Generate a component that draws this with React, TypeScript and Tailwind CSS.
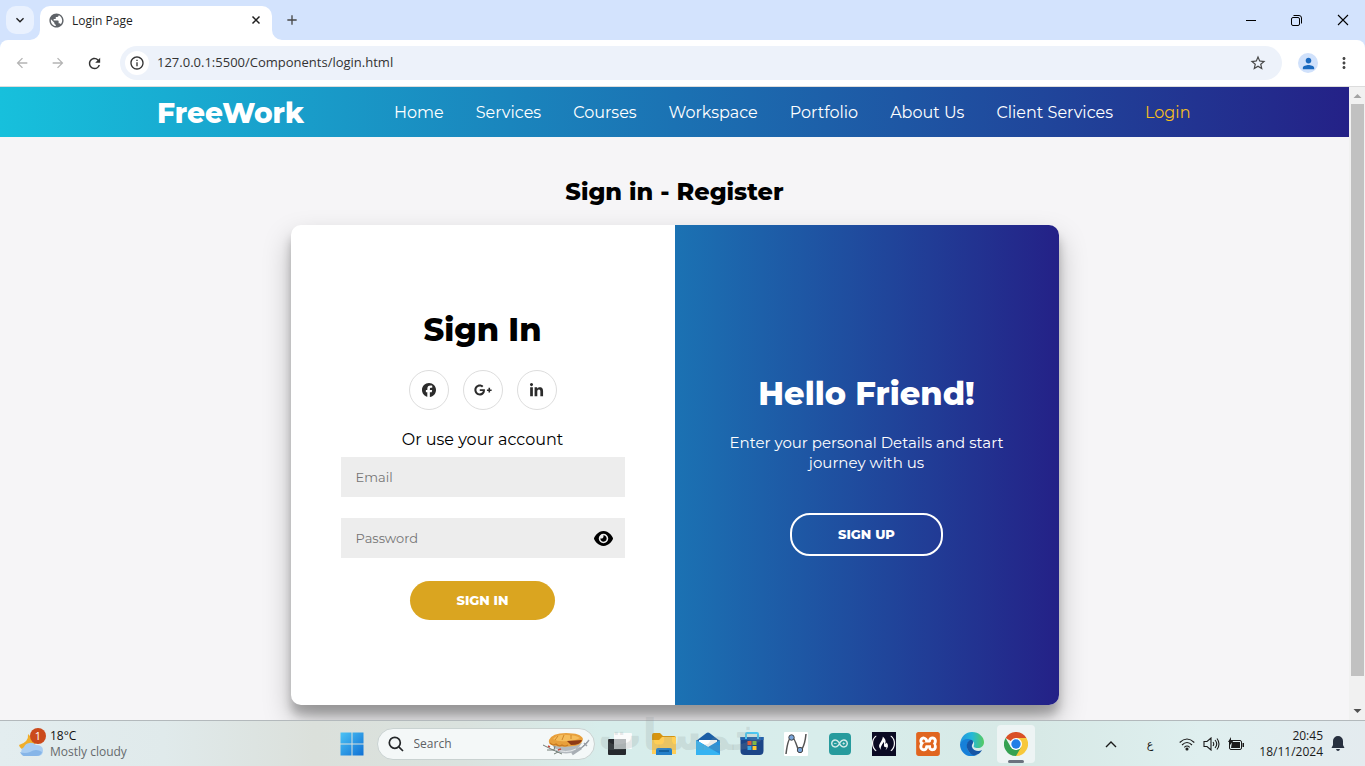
import type { ReactNode } from "react";
import { FaFacebook, FaGooglePlusG, FaLinkedinIn, FaEye } from "react-icons/fa6";
import {
  MdPublic,
  MdArrowBack,
  MdArrowForward,
  MdRefresh,
  MdStarBorder,
  MdMoreVert,
  MdPerson,
  MdInfoOutline,
  MdAdd,
  MdKeyboardArrowDown,
} from "react-icons/md";
import { SiArduino, SiFreecodecamp, SiXampp } from "react-icons/si";

const navLinks = ["Home", "Services", "Courses", "Workspace", "Portfolio", "About Us", "Client Services", "Login"];

function TabStrip() {
  return (
    <div className="flex h-10 items-end bg-[#d3e3fd]">
      <button aria-label="Search tabs" className="mb-1.5 ml-1.5 flex h-7 w-7 items-center justify-center rounded-[10px] bg-[#e9f1fe] text-[#1f1f1f]">
        <MdKeyboardArrowDown size={16} />
      </button>
      <div className="relative ml-1.5 flex h-[34px] w-58 items-center rounded-t-[10px] bg-white px-2">
        <svg className="absolute bottom-0 -left-2.5" width="10" height="10" aria-hidden="true">
          <path d="M10 0v10H0A10 10 0 0 0 10 0z" fill="#fff" />
        </svg>
        <svg className="absolute -right-2.5 bottom-0" width="10" height="10" aria-hidden="true">
          <path d="M0 0v10h10A10 10 0 0 1 0 0z" fill="#fff" />
        </svg>
        <MdPublic size={17} className="mb-1.5 text-[#5f6368]" />
        <span className="mb-1 ml-[7px] flex-1 text-xs text-[#1f1f1f]">Login Page</span>
        <button aria-label="Close tab" className="mb-1.5 flex h-4 w-4 items-center justify-center text-[#1f1f1f]">
          <svg width="10" height="10" viewBox="0 0 10 10" stroke="currentColor" strokeWidth="1.5" aria-hidden="true">
            <path d="M1.5 1.5l7 7M8.500 1.5l-7 7" />
          </svg>
        </button>
      </div>
      <button aria-label="New tab" className="mb-3 ml-3 text-[#474747]">
        <MdAdd size={16} />
      </button>
      <div className="flex h-10 flex-1 items-center justify-end gap-[35px] pr-4 text-black">
        <button aria-label="Minimize">
          <svg width="10" height="10" viewBox="0 0 10 10" stroke="currentColor" aria-hidden="true">
            <path d="M0 5.5h10" />
          </svg>
        </button>
        <button aria-label="Restore">
          <svg width="11" height="11" viewBox="0 0 11 11" fill="none" stroke="currentColor" aria-hidden="true">
            <rect x=".5" y="2.5" width="8" height="8" rx="1.5" />
            <path d="M2.5 .5H8Q10.500 .5 10.500 3V8.500" />
          </svg>
        </button>
        <button aria-label="Close">
          <svg width="12" height="12" viewBox="0 0 12 12" stroke="currentColor" strokeWidth="1.1" aria-hidden="true">
            <path d="M1 1l10 10M11 1L1 11" />
          </svg>
        </button>
      </div>
    </div>
  );
}

function Toolbar() {
  return (
    <div className="bg-[#d3e3fd]">
      <div className="flex h-[47px] items-center rounded-t-lg border-b border-[#dcdcdc] bg-white pr-3">
        <div className="ml-3.5 flex gap-5">
          <button aria-label="Back" className="text-[#b4b4b4]">
            <MdArrowBack size={16} />
          </button>
          <button aria-label="Forward" className="text-[#b4b4b4]">
            <MdArrowForward size={16} />
          </button>
          <button aria-label="Reload" className="text-[#333333]">
            <MdRefresh size={17} />
          </button>
        </div>
        <div className="ml-[17px] flex h-[34px] flex-1 items-center rounded-full bg-[#edf2fa] pr-[15px] pl-[5px]">
          <span className="flex h-6 w-6 items-center justify-center rounded-full bg-white text-[#333333]">
            <MdInfoOutline size={16} />
          </span>
          <input
            aria-label="Address"
            defaultValue="127.0.0.1:5500/Components/login.html"
            className="ml-2 flex-1 bg-transparent text-[13px] text-[#333333] outline-none"
          />
          <button aria-label="Bookmark this page" className="text-[#474747]">
            <MdStarBorder size={18} />
          </button>
        </div>
        <button aria-label="Profile" className="ml-4 flex h-5 w-5 items-center justify-center rounded-full bg-[#d0e1fb] text-[#1969bf]">
          <MdPerson size={17} />
        </button>
        <button aria-label="Menu" className="ml-[17px] text-[#474747]">
          <MdMoreVert size={18} />
        </button>
      </div>
    </div>
  );
}

function SiteHeader() {
  return (
    <header className="flex h-[50px] items-center bg-[linear-gradient(90deg,#17c0dc_0%,#1b72b3_50%,#242187_100%)] pt-px pl-[157px] text-white">
      <a href="#home" className="w-[237px] text-[28px] leading-9 font-extrabold">
        FreeWork
      </a>
      <nav className="flex gap-8 pt-px text-base">
        {navLinks.map((label) => (
          <a
            key={label}
            href={"#" + label.toLowerCase().replace(" ", "-")}
            className={label === "Login" ? "whitespace-nowrap text-[#f5bd1f]" : "whitespace-nowrap"}
          >
            {label}
          </a>
        ))}
      </nav>
    </header>
  );
}

function SocialLink({ label, children }: { label: string; children: ReactNode }) {
  return (
    <a href="#social" aria-label={label} className="flex h-10 w-10 items-center justify-center rounded-full border border-[#dddddd] text-[#2b2b2b]">
      {children}
    </a>
  );
}

function LoginCard() {
  return (
    <section className="flex min-h-[480px] w-full max-w-[768px] shrink-0 overflow-hidden rounded-[10px] bg-white shadow-[0_14px_28px_rgba(0,0,0,0.25),0_10px_10px_rgba(0,0,0,0.22)]">
      <form className="flex w-1/2 flex-col items-center justify-center px-[50px]">
        <h2 className="text-[32px] leading-10 font-extrabold">Sign In</h2>
        <div className="mt-5 flex gap-3.5">
          <SocialLink label="Facebook">
            <FaFacebook size={14} />
          </SocialLink>
          <SocialLink label="Google Plus">
            <FaGooglePlusG size={18} />
          </SocialLink>
          <SocialLink label="LinkedIn">
            <FaLinkedinIn size={15} />
          </SocialLink>
        </div>
        <p className="mt-[18px] text-base leading-6">Or use your account</p>
        <input
          type="email"
          aria-label="Email"
          placeholder="Email"
          className="mt-[5px] h-10 w-full bg-[#ededed] px-[15px] text-[13px] placeholder:text-[#757575]"
        />
        <div className="relative mt-[21px] w-full">
          <input
            type="password"
            aria-label="Password"
            placeholder="Password"
            className="h-10 w-full bg-[#ededed] px-[15px] text-[13px] placeholder:text-[#757575]"
          />
          <button type="button" aria-label="Show password" className="absolute inset-y-0 right-3 text-black">
            <FaEye size={19} />
          </button>
        </div>
        <button type="button" className="mt-[23px] h-[39px] rounded-full bg-[#daa520] px-[47px] text-[13px] font-extrabold text-white">
          SIGN IN
        </button>
      </form>
      <div className="flex w-1/2 flex-col items-center justify-center bg-[linear-gradient(90deg,#1b72b3,#242187)] px-10 text-center text-white">
        <h2 className="text-[32px] leading-10 font-extrabold">Hello Friend!</h2>
        <p className="mt-[19px] max-w-[290px] text-[15px] leading-5">Enter your personal Details and start journey with us</p>
        <button type="button" className="mt-10 h-[43px] rounded-[20px] border-2 border-white px-[46px] text-[13px] font-extrabold">
          SIGN UP
        </button>
      </div>
    </section>
  );
}

function ScrollBar() {
  return (
    <div className="flex w-4 flex-col items-center bg-[#f1f1f1]" aria-hidden="true">
      <svg width="16" height="17" viewBox="0 0 16 17">
        <path d="M4.500 11L8.500 7l4 4z" fill="#a3a3a3" />
      </svg>
      <div className="w-[13px] flex-1 bg-[#c1c1c1]" />
      <div className="flex h-11 items-end">
        <svg width="16" height="17" viewBox="0 0 16 17">
          <path d="M4.500 6L8.500 10l4-4z" fill="#505050" />
        </svg>
      </div>
    </div>
  );
}

function TaskItem({ label, active, children }: { label: string; active?: boolean; children: ReactNode }) {
  return (
    <button aria-label={label} className="flex h-[45px] w-11 items-center justify-center">
      {active ? (
        <span className="relative flex h-[38px] w-[38px] items-center justify-center rounded bg-[#edf4f4]">
          {children}
          <span className="absolute bottom-0 h-[3px] w-4 rounded-full bg-[#6b727e]" />
        </span>
      ) : (
        children
      )}
    </button>
  );
}

function WeatherIcon() {
  return (
    <svg width="28" height="32" viewBox="0 0 28 32" aria-hidden="true">
      <path d="M10 6q1 8-9 11 1 5 8 5 7-1 9-8z" fill="#f0ae2b" />
      <path d="M6 28a5 5 0 0 1 0-9 7 6 0 0 1 12-2q7 0 7 5.500 0 5.500-6 5.500z" fill="#a9cdf2" />
      <path d="M2 24q5 2 10 0 6-4 12 0-1 4-6 4H6q-2 0-4-4z" fill="#86b5e8" />
      <circle cx="20" cy="8" r="8" fill="#cb4a1c" />
      <text x="20" y="12" textAnchor="middle" fontSize="11" fill="#fff">1</text>
    </svg>
  );
}

function WindowsIcon() {
  return (
    <svg width="24" height="24" viewBox="0 0 24 24" aria-hidden="true">
      <defs>
        <linearGradient id="win" x1="0" y1="0" x2="1" y2="1">
          <stop offset="0" stopColor="#4cc3f5" />
          <stop offset="1" stopColor="#0f70d4" />
        </linearGradient>
      </defs>
      <path d="M.5.5h11v11H.5zM12.500.5h11v11h-11zM.5 12.500h11v11H.5zM12.500 12.500h11v11h-11z" fill="url(#win)" />
    </svg>
  );
}

function PieIcon() {
  return (
    <svg width="48" height="24" viewBox="0 0 48 24" aria-hidden="true">
      <path d="M9 11l5 8q10 5 20 0l6-8z" fill="#b4babf" />
      <path d="M13 17q11 5 21 0" fill="none" stroke="#e8ebed" />
      <path d="M7 8q3-7 17-7 15 0 17 6-1 6-9 7-14 2-22-1-4-1-3-5z" fill="#e8a03c" />
      <path d="M11 7q5-5 14-4 9 0 13 3-5 3-13 3-9 1-14-2z" fill="#f5bd5c" />
      <path d="M25 9l15-1q-1 5-11 5z" fill="#8e3b17" />
      <path d="M8 11q3 3 6 1 3 3 6 1 3 2 6 0" fill="none" stroke="#c97a20" strokeWidth="1.200" />
      <path d="M16 4l-3 4M22 3l-2 5M29 3v4" fill="none" stroke="#cf8628" />
      <path d="M30 22l9-6" stroke="#a8aeb4" strokeWidth="3" />
      <path d="M38 17l6-5 3-4M42 11l3 3" stroke="#9aa1a8" strokeWidth="1.400" />
      <path d="M1 13l8 4 11 5M5 18h7M12 18l1-4M12 22l4-2" stroke="#727d76" fill="none" />
      <path d="M6 14l2 1M16 18l3-1" stroke="#c9493a" strokeWidth="1.500" />
    </svg>
  );
}

function StackIcon() {
  return (
    <svg width="24" height="24" viewBox="0 0 24 24" aria-hidden="true">
      <rect y="7" width="18" height="16" rx="1" fill="#26292e" />
      <rect x="6" y="1" width="18" height="16" rx="1" fill="#fbfcfc" />
      <path d="M6 7h12v10H7q-1 0-1-1z" fill="#b5b9bb" />
    </svg>
  );
}

function FolderIcon() {
  return (
    <svg width="24" height="24" viewBox="0 0 24 24" aria-hidden="true">
      <path d="M0 3q0-2 2-2h6l3 3h11q2 0 2 2v15q0 1-1 1H1q-1 0-1-1z" fill="#d7940f" />
      <path d="M0 8h7l3-3h13q1 0 1 1v16H0z" fill="#ffce57" />
      <path d="M4 23v-5q0-2 2-2h12q2 0 2 2v5z" fill="#247fc8" />
      <path d="M7 19h10" stroke="#0d5795" strokeWidth="1.500" />
    </svg>
  );
}

function MailIcon() {
  return (
    <svg width="24" height="24" viewBox="0 0 24 24" aria-hidden="true">
      <path d="M0 9l10.500-8q1.500-1 3 0L24 9v4H0z" fill="#1b5ea6" />
      <path d="M3 8h18v2l-9 7-9-7z" fill="#fff" />
      <path d="M0 8l12 7 12-7v14q0 1-1 1H1q-1 0-1-1z" fill="#2390dc" />
      <path d="M0 8l24 14q0 1-1 1H1q-1 0-1-1z" fill="#35b3f2" />
    </svg>
  );
}

function StoreIcon() {
  return (
    <svg width="24" height="24" viewBox="0 0 24 24" aria-hidden="true">
      <path d="M.5 5h23v14q0 4-4 4h-15q-4 0-4-4z" fill="#1c4587" />
      <path d="M.5 5h23v3H.5z" fill="#2162ad" />
      <path d="M6 7V2q0-1 1-1h10q1 0 1 1v5" fill="none" stroke="#4cc8f2" strokeWidth="2" />
      <path d="M7.500 9h4v4h-4z" fill="#ef5127" />
      <path d="M12.500 9h4v4h-4z" fill="#80bd3c" />
      <path d="M7.500 14h4v4h-4z" fill="#31a8ea" />
      <path d="M12.500 14h4v4h-4z" fill="#ffc932" />
    </svg>
  );
}

function CurveIcon() {
  return (
    <svg width="24" height="24" viewBox="0 0 24 24" aria-hidden="true">
      <rect width="24" height="24" rx="1" fill="#fff" />
      <path d="M2 22Q4 5 8 5q2 0 6 12 2 2 4 0 3-5 4-15" fill="none" stroke="#555" strokeWidth="1.500" />
      <circle cx="7.500" cy="5.500" r="2.700" fill="#78a4da" stroke="#444" />
      <circle cx="16" cy="18" r="2.700" fill="#78a4da" stroke="#444" />
    </svg>
  );
}

function EdgeIcon() {
  return (
    <svg width="24" height="24" viewBox="0 0 24 24" aria-hidden="true">
      <defs>
        <linearGradient id="edgeTop" x1="0" x2="1">
          <stop offset="0" stopColor="#2294df" />
          <stop offset=".5" stopColor="#25b8d8" />
          <stop offset="1" stopColor="#55cb60" />
        </linearGradient>
      </defs>
      <path d="M0 12C1 4 6 0 12 0c7 0 12 5 12 10 0 4-3 6-6 6-4 0-5-1-4-3 1-3-2-5-5-5-4 0-7 1-9 4z" fill="url(#edgeTop)" />
      <path d="M0 12c2-5 8-6 12-4-5 1-6 6-4 10 2 4 6 5 9 5-9 4-17-2-17-11z" fill="#1680d9" />
      <path d="M10 8c-5 3-4 10 1 14 4 3 9 0 11-4-3 2-9 1-10-3-1-3 3-4 0-7z" fill="#1656a6" />
    </svg>
  );
}

function ChromeIcon() {
  return (
    <svg width="24" height="24" viewBox="0 0 24 24" aria-hidden="true">
      <path d="M12 12L1.600 6A12 12 0 0 1 22.400 6z" fill="#d95026" />
      <path d="M12 12V6h10.400A12 12 0 0 1 12 24z" fill="#f7c83a" />
      <path d="M1.600 6l5.200 9 5.200 3 5.200-3L12 24A12 12 0 0 1 1.600 6z" fill="#35a152" />
      <circle cx="12" cy="12" r="6" fill="#fff" />
      <circle cx="12" cy="12" r="4.700" fill="#237ee6" />
    </svg>
  );
}

function SystemTray() {
  return (
    <div className="flex flex-1 items-center justify-end pr-5 text-[#1a1a1a]">
      <button aria-label="Show hidden icons" className="mr-[30px]">
        <svg width="12" height="8" viewBox="0 0 12 8" fill="none" stroke="currentColor" strokeWidth="1.400" aria-hidden="true">
          <path d="M1 7l5-5 5 5" />
        </svg>
      </button>
      <span lang="ar" className="mr-[26px] pt-1 font-['DejaVu_Sans',sans-serif] text-[11px]">ع</span>
      <button aria-label="Network, sound and battery" className="mr-3.5 flex items-center gap-2">
        <svg width="16" height="14" viewBox="0 0 16 14" fill="none" stroke="currentColor" strokeWidth="1.100" aria-hidden="true">
          <path d="M.7 5.500q7.300-7 14.600 0M3 8q5-5 10 0M5.300 10.300q2.700-2.600 5.400 0" />
          <circle cx="8" cy="12" r="1" fill="currentColor" />
        </svg>
        <svg width="17" height="14" viewBox="0 0 17 14" fill="none" stroke="currentColor" strokeWidth="1.100" aria-hidden="true">
          <path d="M1 4.500h3l4-3.500v12L4 9.500H1zM10 5q1.500 2 0 4M12 3q3.500 4 0 8M14 1.500q4 5.500 0 11" />
        </svg>
        <svg width="17" height="14" viewBox="0 0 17 14" aria-hidden="true">
          <rect x="1.500" y="3.500" width="12" height="9" rx="1.500" fill="none" stroke="currentColor" />
          <path d="M4 5h8v6H3z" fill="currentColor" />
          <path d="M14.500 6h1.500v4h-1.500zM3 0L0 5h2v3l4-5H3z" fill="currentColor" />
        </svg>
      </button>
      <time className="mr-2 text-right text-xs leading-4">
        20:45
        <br />
        18/11/2024
      </time>
      <svg width="14" height="17" viewBox="0 0 14 17" aria-hidden="true">
        <path d="M7 1a5 5 0 0 0-5 5v4l-1.500 3h13L12 10V6a5 5 0 0 0-5-5zM5 14h4q-.5 2-2 2t-2-2z" fill="#27303f" />
      </svg>
    </div>
  );
}

function Taskbar() {
  return (
    <footer className="relative flex h-[46px] items-center border-t border-[#b3b9bc] bg-[linear-gradient(90deg,#e3edef_0%,#e0eaeb_12%,#dbe0db_23%,#dae2de_34%,#d7edeb_44%,#d8edeb_61%,#d7e9e6_76%,#dfefef_88%,#e4ebef_100%)]">
      <div className="flex flex-1 items-center pl-[18px]">
        <WeatherIcon />
        <div className="ml-1 text-xs leading-4">
          <div className="text-[#111111]">18°C</div>
          <div className="text-[#666a6c]">Mostly cloudy</div>
        </div>
      </div>
      <div className="ml-1 flex items-center">
        <TaskItem label="Start">
          <WindowsIcon />
        </TaskItem>
        <label className="mx-[3px] flex h-8 w-[218px] items-center rounded-full border border-[#c9d2d1] bg-[#f4f8f8] pr-1 pl-2.5">
          <svg width="16" height="16" viewBox="0 0 16 16" fill="none" stroke="#242729" strokeWidth="1.700" aria-hidden="true">
            <circle cx="6.800" cy="6.800" r="5.500" />
            <path d="M10.800 10.800l4.200 4.200" />
          </svg>
          <input aria-label="Search" placeholder="Search" className="ml-2.5 w-30 flex-1 bg-transparent text-xs outline-none placeholder:text-[#5d6164]" />
          <PieIcon />
        </label>
        <TaskItem label="Task view">
          <StackIcon />
        </TaskItem>
        <TaskItem label="File Explorer">
          <FolderIcon />
        </TaskItem>
        <TaskItem label="Mail">
          <MailIcon />
        </TaskItem>
        <TaskItem label="Store">
          <StoreIcon />
        </TaskItem>
        <TaskItem label="Curve editor">
          <CurveIcon />
        </TaskItem>
        <TaskItem label="Arduino">
          <span className="flex h-[22px] w-[22px] items-center justify-center rounded bg-[#279b9d] text-[#d6ecea]">
            <SiArduino size={17} />
          </span>
        </TaskItem>
        <TaskItem label="freeCodeCamp">
          <span className="flex h-6 w-6 items-center justify-center bg-[#0a0a23] text-white">
            <SiFreecodecamp size={23} />
          </span>
        </TaskItem>
        <TaskItem label="XAMPP">
          <span className="flex h-6 w-6 items-center justify-center rounded-sm bg-white text-[#e0651f]">
            <SiXampp size={24} />
          </span>
        </TaskItem>
        <TaskItem label="Edge">
          <EdgeIcon />
        </TaskItem>
        <TaskItem label="Chrome" active>
          <ChromeIcon />
        </TaskItem>
      </div>
      <SystemTray />
      <span
        lang="ar"
        dir="rtl"
        className="pointer-events-none absolute -top-3.5 left-[598px] font-['DejaVu_Sans',sans-serif] text-[44px] leading-[56px] font-bold text-[#8a9494]/20"
      >
        خمسات
      </span>
    </footer>
  );
}

export default function App() {
  return (
    <div className="flex h-screen flex-col overflow-hidden font-['Open_Sans',sans-serif]">
      <TabStrip />
      <Toolbar />
      <div className="flex min-h-0 flex-1">
        <div className="min-w-0 flex-1 overflow-hidden bg-[#f6f5f7] font-['Montserrat',Inter,sans-serif] text-black">
          <SiteHeader />
          <main className="flex flex-col items-center">
            <h1 className="mt-[37px] mb-[15px] text-2xl leading-9 font-extrabold">Sign in - Register</h1>
            <LoginCard />
          </main>
        </div>
        <ScrollBar />
      </div>
      <Taskbar />
    </div>
  );
}
